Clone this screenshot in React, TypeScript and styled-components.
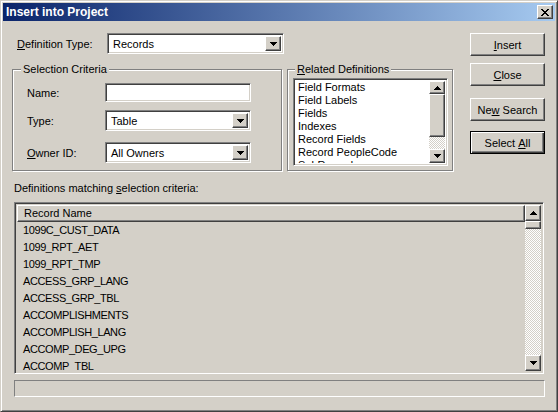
import React from 'react';
import styled, { createGlobalStyle, css } from 'styled-components';

const GlobalStyle = createGlobalStyle`
  html, body {
    margin: 0;
    padding: 0;
    background: #d4d0c8;
  }
  body {
    font-family: "Liberation Sans", Arial, sans-serif;
    font-size: 11px;
    color: #000;
  }
  * {
    box-sizing: border-box;
  }
`;

const raised = css`
  border: 1px solid;
  border-color: #fff #404040 #404040 #fff;
  box-shadow: inset -1px -1px 0 #808080;
  background: #d4d0c8;
`;

const sunken = css`
  border: 1px solid;
  border-color: #808080 #fff #fff #808080;
  box-shadow: inset 1px 1px 0 #404040, inset -1px -1px 0 #d4d0c8;
`;

const Window = styled.div`
  width: 558px;
  height: 412px;
  display: flex;
  flex-direction: column;
  background: #d4d0c8;
  border: 1px solid;
  border-color: #d4d0c8 #404040 #404040 #d4d0c8;
  box-shadow: inset 1px 1px 0 #fff, inset -1px -1px 0 #808080;
  padding: 2px;
`;

const TitleBar = styled.div`
  height: 18px;
  display: flex;
  align-items: center;
  justify-content: space-between;
  padding-left: 3px;
  background: linear-gradient(to right, #0a246a, #a6caf0);
`;

const Title = styled.span`
  color: #fff;
  font-weight: bold;
  font-size: 12px;
`;

const CloseButton = styled.div`
  ${raised};
  width: 16px;
  height: 14px;
  margin-right: 2px;
  display: flex;
  align-items: center;
  justify-content: center;
`;

const Body = styled.div`
  flex: 1;
  display: flex;
  flex-direction: column;
  padding: 12px 10px 0 9px;
`;

const TopSection = styled.div`
  display: flex;
  justify-content: space-between;
  align-items: flex-start;
`;

const LeftPane = styled.div`
  width: 442px;
  display: flex;
  flex-direction: column;
`;

const DefRow = styled.div`
  display: flex;
  align-items: center;
  height: 21px;
  padding-left: 5px;
`;

const FieldLabel = styled.span<{ $w: number }>`
  width: ${p => p.$w}px;
  flex-shrink: 0;
`;

const Combo = styled.div<{ $w: number }>`
  ${sunken};
  width: ${p => p.$w}px;
  height: 21px;
  background: #fff;
  display: flex;
  padding: 2px;
`;

const ComboText = styled.span`
  flex: 1;
  padding-left: 3px;
  line-height: 17px;
  white-space: nowrap;
`;

const DropButton = styled.div`
  ${raised};
  width: 16px;
  display: flex;
  align-items: center;
  justify-content: center;
`;

const Groups = styled.div`
  display: flex;
  gap: 5px;
  margin-top: 9px;
`;

const GroupBox = styled.fieldset<{ $w: number; $pad: string }>`
  margin: 0;
  width: ${p => p.$w}px;
  height: 108px;
  min-inline-size: 0;
  padding: ${p => p.$pad};
  border: 1px solid #808080;
  box-shadow: inset 1px 1px 0 #fff, 1px 1px 0 #fff;
`;

const Legend = styled.legend<{ $ml: number }>`
  padding: 0 2px;
  margin-left: ${p => p.$ml}px;
  line-height: 13px;
  background: #d4d0c8;
`;

const FormRow = styled.div<{ $top: number }>`
  display: flex;
  align-items: center;
  margin-top: ${p => p.$top}px;
  padding-left: 6px;
`;

const TextBox = styled.div`
  ${sunken};
  width: 146px;
  height: 19px;
  background: #fff;
`;

const ListBox = styled.div`
  ${sunken};
  width: 155px;
  height: 88px;
  background: #fff;
  display: flex;
  padding: 2px;
`;

const ListItems = styled.div`
  flex: 1;
  overflow: hidden;
  padding-left: 2px;
`;

const ListItem = styled.div`
  line-height: 13px;
  white-space: nowrap;
`;

const VScroll = styled.div`
  width: 16px;
  display: flex;
  flex-direction: column;
`;

const ScrollButton = styled.div<{ $h: number }>`
  ${raised};
  height: ${p => p.$h}px;
  flex-shrink: 0;
  display: flex;
  align-items: center;
  justify-content: center;
`;

const Thumb = styled.div<{ $h: number }>`
  ${raised};
  height: ${p => p.$h}px;
  flex-shrink: 0;
`;

const Track = styled.div`
  flex: 1;
  background: repeating-conic-gradient(#fff 0 25%, #d4d0c8 0 50%) 0 0 / 2px 2px;
`;

const ButtonColumn = styled.div`
  width: 75px;
  display: flex;
  flex-direction: column;
`;

const PushButton = styled.div<{ $top: number; $default?: boolean }>`
  height: 23px;
  margin-top: ${p => p.$top}px;
  display: flex;
  align-items: center;
  justify-content: center;
  ${p =>
    p.$default
      ? css`
          border: 1px solid #000;
          box-shadow: inset 1px 1px 0 #fff, inset -1px -1px 0 #404040, inset -2px -2px 0 #808080;
        `
      : raised};
`;

const SectionLabel = styled.div`
  margin-top: 11px;
  padding-left: 2px;
  line-height: 13px;
`;

const ListView = styled.div`
  ${sunken};
  margin: 7px 0 0 2px;
  width: 530px;
  height: 172px;
  padding: 2px;
  display: flex;
  background: #d4d0c8;
`;

const ListMain = styled.div`
  flex: 1;
  display: flex;
  flex-direction: column;
  overflow: hidden;
`;

const ColumnHeader = styled.div`
  ${raised};
  height: 17px;
  flex-shrink: 0;
  padding-left: 6px;
  line-height: 15px;
`;

const ListRow = styled.div`
  height: 17px;
  flex-shrink: 0;
  line-height: 17px;
  padding-left: 6px;
  letter-spacing: -0.4px;
  white-space: nowrap;
`;

const StatusBar = styled.div`
  margin: 6px 0 0 2px;
  width: 531px;
  height: 17px;
  border: 1px solid;
  border-color: #808080 #fff #fff #808080;
`;

const ArrowDown = () => (
  <svg width="7" height="4" viewBox="0 0 7 4">
    <path d="M0 0h7v1H0zM1 1h5v1H1zM2 2h3v1H2zM3 3h1v1H3z" fill="#000" />
  </svg>
);

const ArrowUp = () => (
  <svg width="7" height="4" viewBox="0 0 7 4">
    <path d="M3 0h1v1H3zM2 1h3v1H2zM1 2h5v1H1zM0 3h7v1H0z" fill="#000" />
  </svg>
);

const CloseGlyph = () => (
  <svg width="8" height="7" viewBox="0 0 8 7">
    <path
      d="M0 0h2v1H0zM6 0h2v1H6zM1 1h2v1H1zM5 1h2v1H5zM2 2h4v1H2zM3 3h2v1H3zM2 4h4v1H2zM1 5h2v1H1zM5 5h2v1H5zM0 6h2v1H0zM6 6h2v1H6z"
      fill="#000"
    />
  </svg>
);

const ComboBox = ({ width, value }: { width: number; value: string }) => (
  <Combo $w={width}>
    <ComboText>{value}</ComboText>
    <DropButton>
      <ArrowDown />
    </DropButton>
  </Combo>
);

const related = [
  'Field Formats',
  'Field Labels',
  'Fields',
  'Indexes',
  'Record Fields',
  'Record PeopleCode',
  'SubRecord',
];

const records = [
  '1099C_CUST_DATA',
  '1099_RPT_AET',
  '1099_RPT_TMP',
  'ACCESS_GRP_LANG',
  'ACCESS_GRP_TBL',
  'ACCOMPLISHMENTS',
  'ACCOMPLISH_LANG',
  'ACCOMP_DEG_UPG',
  'ACCOMP_TBL',
];

export default function App() {
  return (
    <>
      <GlobalStyle />
      <Window>
        <TitleBar>
          <Title>Insert into Project</Title>
          <CloseButton>
            <CloseGlyph />
          </CloseButton>
        </TitleBar>
        <Body>
          <TopSection>
            <LeftPane>
              <DefRow>
                <FieldLabel $w={90}>
                  <u>D</u>efinition Type:
                </FieldLabel>
                <ComboBox width={177} value="Records" />
              </DefRow>
              <Groups>
                <GroupBox $w={270} $pad="0 6px 6px 8px">
                  <Legend $ml={0}>Selection Criteria</Legend>
                  <FormRow $top={7}>
                    <FieldLabel $w={78}>Name:</FieldLabel>
                    <TextBox />
                  </FormRow>
                  <FormRow $top={8}>
                    <FieldLabel $w={78}>Type:</FieldLabel>
                    <ComboBox width={146} value="Table" />
                  </FormRow>
                  <FormRow $top={11}>
                    <FieldLabel $w={78}>
                      <u>O</u>wner ID:
                    </FieldLabel>
                    <ComboBox width={146} value="All Owners" />
                  </FormRow>
                </GroupBox>
                <GroupBox $w={166} $pad="2px 5px 4px 5px">
                  <Legend $ml={2}>
                    <u>R</u>elated Definitions
                  </Legend>
                  <ListBox>
                    <ListItems>
                      {related.map(r => (
                        <ListItem key={r}>{r}</ListItem>
                      ))}
                    </ListItems>
                    <VScroll>
                      <ScrollButton $h={13}>
                        <ArrowUp />
                      </ScrollButton>
                      <Thumb $h={43} />
                      <Track />
                      <ScrollButton $h={14}>
                        <ArrowDown />
                      </ScrollButton>
                    </VScroll>
                  </ListBox>
                </GroupBox>
              </Groups>
            </LeftPane>
            <ButtonColumn>
              <PushButton $top={0}>
                <u>I</u>nsert
              </PushButton>
              <PushButton $top={7}>
                <u>C</u>lose
              </PushButton>
              <PushButton $top={12}>
                Ne<u>w</u>&nbsp;Search
              </PushButton>
              <PushButton $top={10} $default>
                Select&nbsp;<u>A</u>ll
              </PushButton>
            </ButtonColumn>
          </TopSection>
          <SectionLabel>
            Definitions matching <u>s</u>election criteria:
          </SectionLabel>
          <ListView>
            <ListMain>
              <ColumnHeader>Record Name</ColumnHeader>
              {records.map(r => (
                <ListRow key={r}>{r}</ListRow>
              ))}
            </ListMain>
            <VScroll>
              <ScrollButton $h={16}>
                <ArrowUp />
              </ScrollButton>
              <Thumb $h={8} />
              <Track />
              <ScrollButton $h={16}>
                <ArrowDown />
              </ScrollButton>
            </VScroll>
          </ListView>
          <StatusBar />
        </Body>
      </Window>
    </>
  );
}
